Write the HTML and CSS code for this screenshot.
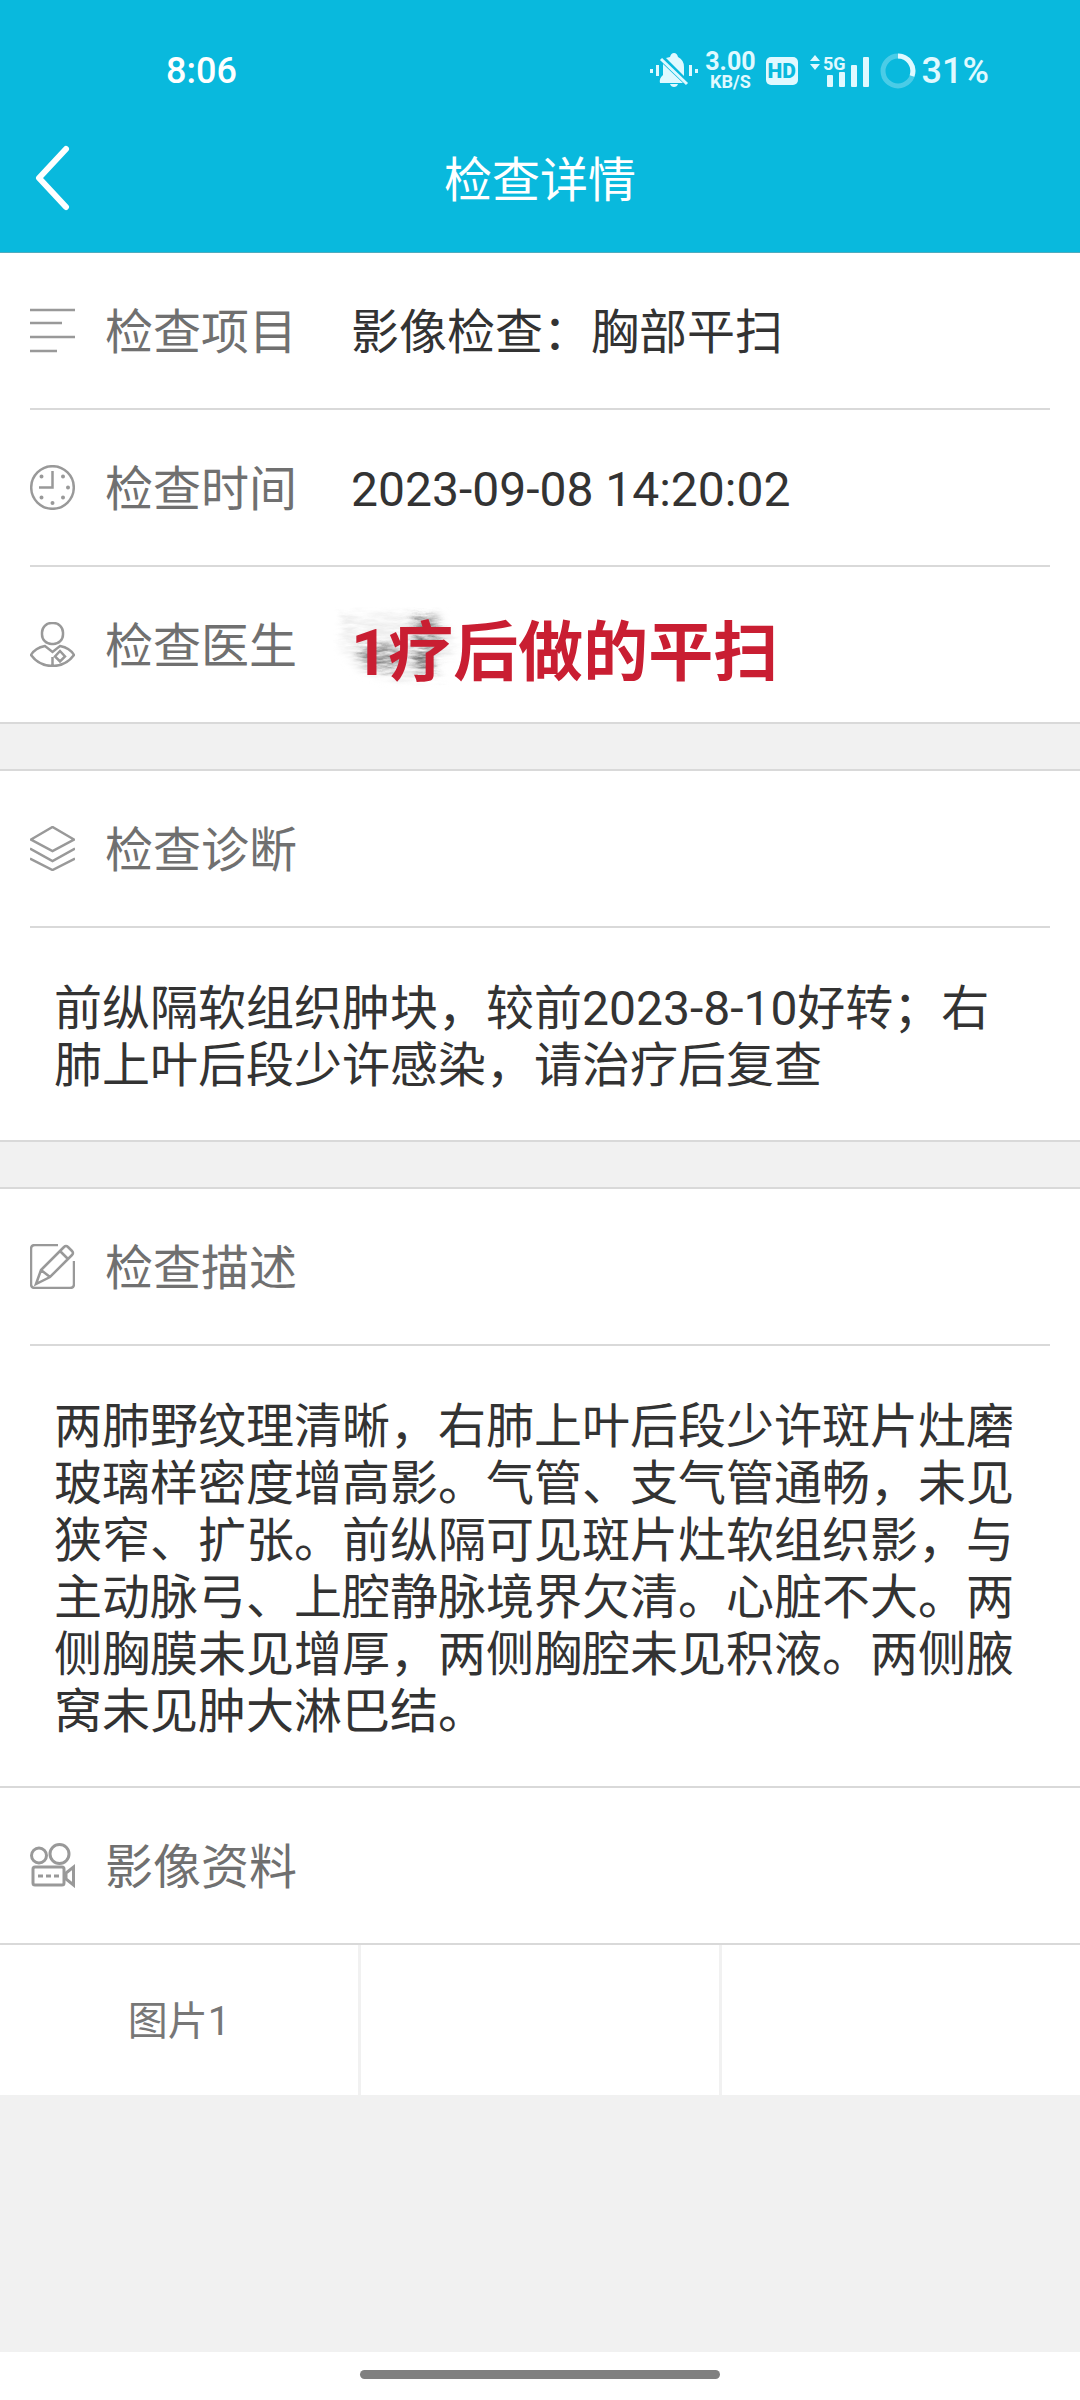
FILE: index.html
```html
<!doctype html>
<html lang="zh-CN">
  <head>
    <meta charset="utf-8">
    <meta name="viewport" content="width=device-width">
    <title>检查详情</title>
    <link rel="stylesheet" href="styles.css">
  </head>

  <body>
    <header class="header">
      <div class="status">
        <span class="time">8:06</span>
        <div class="indicators">
          <svg class="mute" width="48" height="36" viewBox="0 0 48 36" fill="currentColor">
            <path d="M0 16h3v4H0zM6 12h3v11H6zM39 12h3v11h-3zM45 16h3v4h-3z"/>
            <path d="M20 4q1-4 4-4t4 4q6 3 6 10v9L16 5zM13 11l20 19H10q-1-5 3-8z"/>
            <path d="M11 6l26 25" fill="none" stroke="currentColor" stroke-width="3"/>
            <path d="M20 31h8q-1 3-4 3t-4-3z"/>
          </svg>
          <div class="speed"><span>3.00</span><small>KB/S</small></div>
          <span class="hd">HD</span>
          <svg class="signal" width="60" height="34" viewBox="0 0 60 34" fill="currentColor">
            <path d="M0 7l5-6 5 6zM0 10h10l-5 6z"/>
            <text x="13" y="16" class="net">5G</text>
            <rect x="17" y="21" width="6" height="12" rx="1"/>
            <rect x="29" y="18" width="6" height="15" rx="1"/>
            <rect x="41" y="11" width="6" height="22" rx="1"/>
            <rect x="53" y="3" width="6" height="30" rx="1"/>
          </svg>
          <svg class="ring" width="36" height="36" viewBox="0 0 36 36" fill="none" stroke="currentColor" stroke-width="5">
            <circle cx="18" cy="18" r="15" opacity=".3"/>
            <path d="M18 3a15 15 0 0 1 14 20"/>
          </svg>
          <span class="battery">31%</span>
        </div>
      </div>
      <div class="titlebar">
        <button class="back" type="button" aria-label="返回">
          <svg width="36" height="66" viewBox="0 0 36 66" fill="none" stroke="currentColor" stroke-width="6" stroke-linecap="round" stroke-linejoin="round">
            <path d="M31 4L4 33l27 29"/>
          </svg>
        </button>
        <h1>检查详情</h1>
      </div>
    </header>

    <main>
      <section class="panel first">
        <div class="row">
          <svg class="icon" viewBox="0 0 45 45"><path d="M0 2h45M0 15h32M0 29h45M0 43h27"/></svg>
          <h2>检查项目</h2>
          <p>影像检查：胸部平扫</p>
        </div>
        <div class="row">
          <svg class="icon" viewBox="0 0 45 45">
            <circle cx="22.5" cy="22.5" r="21.3"/>
            <path d="M22.5 6v16.500H9"/>
            <path class="dots" d="M11.500 11.500h0M33 11.500h0M38 22.500h0M11.500 32.500h0M33 32.500h0M22.500 38h0"/>
          </svg>
          <h2>检查时间</h2>
          <p>2023-09-08 14:20:02</p>
        </div>
        <div class="row">
          <svg class="icon" viewBox="0 0 45 45">
            <rect x="12" y="1" width="21" height="21" rx="9.500"/>
            <path d="M15 24Q5 26 1 33q8 11 21.500 11T44 33q-4-7-14-9l-7.500 6zM22.500 35v9M30 29l5 5.500-5 5-5-5z"/>
          </svg>
          <h2>检查医生</h2>
          <div class="note">
            <svg class="smudge" width="130" height="84" viewBox="0 0 130 84">
              <filter id="scribble" x="-10%" y="-10%" width="120%" height="120%">
                <feTurbulence type="fractalNoise" baseFrequency=".05 .25" numOctaves="4" seed="7" result="noise"/>
                <feColorMatrix in="noise" values="0 0 0 0 0  0 0 0 0 0  0 0 0 0 0  2 0 0 0 -.3" result="grain"/>
                <feGaussianBlur in="SourceGraphic" stdDeviation="4" result="soft"/>
                <feDisplacementMap in="soft" in2="noise" scale="14" result="rough"/>
                <feComposite in="rough" in2="grain" operator="in"/>
              </filter>
              <g filter="url(#scribble)">
                <path d="M10 10h100v12l10 4v24l-12 8v14L66 78 24 64 8 46z" fill="#eee"/>
                <path d="M26 44l24-6 18 8v18l-22 4-18-8z" fill="#888"/>
                <path d="M80 12h24v14l-4 42H80z" fill="#777"/>
              </g>
            </svg>
            <strong>1疗后做的平扫</strong>
          </div>
        </div>
      </section>

      <section class="panel">
        <div class="row">
          <svg class="icon" viewBox="0 0 45 45"><path d="M22.500 1L44 13.500 22.500 25 1 13.500zM0 22.500L22.500 35 45 22.500M0 32.500L22.500 44 45 32.500"/></svg>
          <h2>检查诊断</h2>
        </div>
        <p class="text">前纵隔软组织肿块，较前2023-8-10好转；右肺上叶后段少许感染，请治疗后复查</p>
      </section>

      <section class="panel media">
        <div class="row">
          <svg class="icon" viewBox="0 0 45 45">
            <path d="M28 1H5Q1 1 1 5v35q0 4 4 4h35q4 0 4-4V17"/>
            <path d="M6 40l5-14L34 3q2-2 4 0l4 4q2 2 0 4L20 33zM11 26l9 7M30 7l8 8"/>
          </svg>
          <h2>检查描述</h2>
        </div>
        <p class="text">两肺野纹理清晰，右肺上叶后段少许斑片灶磨玻璃样密度增高影。气管、支气管通畅，未见狭窄、扩张。前纵隔可见斑片灶软组织影，与主动脉弓、上腔静脉境界欠清。心脏不大。两侧胸膜未见增厚，两侧胸腔未见积液。两侧腋窝未见肿大淋巴结。</p>
        <div class="row full">
          <svg class="icon bold" viewBox="0 0 45 45">
            <circle cx="9" cy="12.500" r="7.500"/>
            <circle cx="29.500" cy="11" r="9.500"/>
            <rect x="3" y="24" width="31" height="18" rx="2"/>
            <path d="M43.500 24v18L36 36v-6zM8 33h5M16 33h5M24 33h5"/>
          </svg>
          <h2>影像资料</h2>
        </div>
        <div class="pictures">
          <a href="#">图片1</a>
          <span></span>
          <span></span>
        </div>
      </section>
    </main>

    <footer class="navbar"><span class="handle"></span></footer>
  </body>
</html>
```

FILE: styles.css
```css
* { box-sizing: border-box; }

body, h1, h2, p { margin: 0; }

body {
  display: flex;
  flex-direction: column;
  min-height: 100vh;
  font-family: Roboto, "Noto Sans CJK SC", sans-serif;
  font-size: 48px;
  line-height: 57px;
  color: #333;
  background-color: #f1f1f1;
}

h1, h2 {
  font-size: 48px;
  font-weight: 400;
}

/* header */
.header {
  color: #fff;
  background-color: #09b9dd;
  border-bottom: 1px solid #4fabbe;
}

.status {
  display: flex;
  justify-content: space-between;
  align-items: center;
  height: 104px;
  padding: 37px 91px 0 166px;
  font-size: 36px;
  font-weight: 500;
  line-height: 36px;
}

.indicators {
  display: flex;
  align-items: center;
  color: #e0f9ff;
}

.speed {
  display: flex;
  flex-direction: column;
  align-items: center;
  margin: 0 10px 0 7px;
  font-size: 25px;
  font-weight: 700;
  line-height: 22px;
}

.speed small {
  font-size: 18px;
  line-height: 18px;
}

.hd {
  width: 32px;
  border-radius: 5px;
  font-size: 21px;
  font-weight: 900;
  line-height: 28px;
  text-align: center;
  color: #09b9dd;
  background-color: #e0f9ff;
}

.signal {
  margin: 0 10px 0 12px;
  overflow: visible;
}

.net {
  font-size: 18px;
  font-weight: 700;
}

.ring { margin-right: 6px; }

.titlebar {
  display: grid;
  grid-template-columns: 1fr auto 1fr;
  align-items: center;
  height: 148px;
  padding: 0 35px;
}

.titlebar h1, .row h2, .row p { padding-top: 4px; }

.back {
  display: flex;
  justify-self: start;
  padding: 0;
  border: 0;
  color: #fff;
  background: none;
}

/* panels */
main { flex: 1; }

.panel {
  margin-bottom: 45px;
  border-top: 2px solid #d9d9d9;
  border-bottom: 2px solid #d9d9d9;
  background-color: #fff;
}

.panel.first { border-top: 0; }

.panel.media {
  margin-bottom: 0;
  border-bottom: 0;
}

.row {
  display: flex;
  align-items: center;
  height: 157px;
  margin: 0 30px;
  border-bottom: 2px solid #d9d9d9;
}

.first .row:last-child {
  height: 155px;
  border-bottom: 0;
}

.row.full {
  height: 159px;
  margin: 0;
  padding: 0 30px;
  border-top: 2px solid #d9d9d9;
}

.row h2 {
  margin: 0 54px 0 30px;
  color: #707070;
}

.icon {
  width: 45px;
  height: 45px;
  fill: none;
  stroke: #999;
  stroke-width: 2.5;
}

.icon.bold { stroke-width: 3; }

.icon .dots {
  stroke-width: 4;
  stroke-linecap: round;
}

.text { padding: 52px 54px 46px; }

/* handwritten note over the blanked name */
.note {
  position: relative;
  padding-top: 16px;
  font-size: 65px;
  line-height: 66px;
  color: #c91e32;
}

.note strong {
  position: relative;
  font-weight: 700;
}

.smudge {
  position: absolute;
  top: 0;
  left: -18px;
}

.pictures {
  display: grid;
  grid-template-columns: repeat(3, 1fr);
  gap: 3px;
  background-color: #f1f1f1;
}

.pictures a, .pictures span {
  height: 150px;
  padding-top: 4px;
  font-size: 40px;
  line-height: 146px;
  text-align: center;
  text-decoration: none;
  color: #777;
  background-color: #fff;
}

.navbar {
  display: flex;
  justify-content: center;
  align-items: center;
  height: 48px;
  padding-bottom: 3px;
  background-color: #fff;
}

.handle {
  width: 33.3333%;
  height: 9px;
  border-radius: 5px;
  background-color: #808080;
}
```
